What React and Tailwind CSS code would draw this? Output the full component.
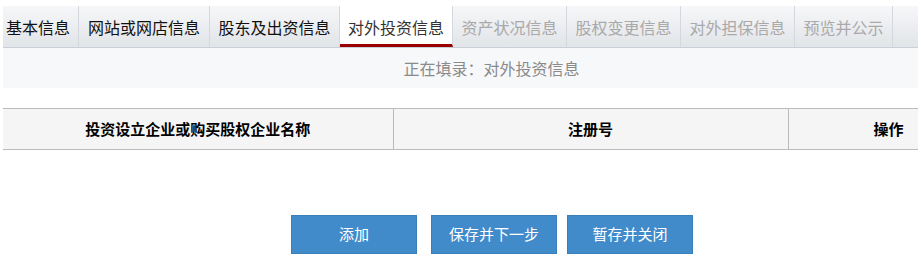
import React from 'react'

const tabs = [
    { label: '基本信息', w: 'w-[76px] pl-[3px] !justify-start', state: 'done' },
    { label: '网站或网店信息', w: 'w-[131px]', state: 'done' },
    { label: '股东及出资信息', w: 'w-[130px]', state: 'done' },
    { label: '对外投资信息', w: 'w-[113px]', state: 'active' },
    { label: '资产状况信息', w: 'w-[114px]', state: 'todo' },
    { label: '股权变更信息', w: 'w-[114px]', state: 'todo' },
    { label: '对外担保信息', w: 'w-[114px]', state: 'todo' },
    { label: '预览并公示', w: 'w-[98px]', state: 'todo' },
]

export default function App() {
    return (
        <div className="w-[921px] h-[267px] bg-white overflow-hidden font-['Noto_Sans_CJK_SC','Microsoft_YaHei',sans-serif]">
            {/* Step tabs */}
            <div className="ml-[3px] mt-[6px] w-[915px] h-[42px] flex bg-gradient-to-b from-[#f6f7f9] to-[#e1e4e8] border-b border-[#c8cfd7]">
                {tabs.map((t) => (
                    <div
                        key={t.label}
                        className={`${t.w} shrink-0 flex items-center justify-center text-[16px] leading-none border-r border-[#d3d8de] ${
                            t.state === 'active'
                                ? 'bg-white text-[#333] border-b-[3px] border-b-[#9b0000] pt-[3px]'
                                : t.state === 'done'
                                    ? 'text-[#111]'
                                    : 'text-[#a9a9a9]'
                        }`}
                    >
                        {t.label}
                    </div>
                ))}
            </div>

            {/* Current step */}
            <div className="ml-[3px] w-[915px] h-[40px] bg-[#f7f8fa] flex items-center justify-center pl-[62px] text-[16px] text-[#8a8a8a] leading-none">
                正在填录：对外投资信息
            </div>

            {/* Table */}
            <div className="ml-[3px] mt-[20px] w-[915px] overflow-hidden">
                <table className="w-[1000px] border-collapse text-[15px] font-bold text-black">
                    <thead>
                        <tr className="h-[41px] bg-[#f5f5f5] border-y border-[#bbbbbb]">
                            <th className="w-[390px] border-r border-[#bbbbbb] text-center font-bold">投资设立企业或购买股权企业名称</th>
                            <th className="w-[395px] border-r border-[#bbbbbb] text-center font-bold">注册号</th>
                            <th className="text-left pl-[85px] font-bold">操作</th>
                        </tr>
                    </thead>
                </table>
            </div>

            {/* Actions */}
            <div className="mt-[65px] flex justify-center gap-[14px] pl-[63px]">
                <button className="w-[126px] h-[39px] bg-[#428bca] border border-[#3a7fba] text-white text-[15px]">添加</button>
                <div className="flex gap-[10px]">
                    <button className="w-[126px] h-[39px] bg-[#428bca] border border-[#3a7fba] text-white text-[15px]">保存并下一步</button>
                    <button className="w-[126px] h-[39px] bg-[#428bca] border border-[#3a7fba] text-white text-[15px]">暂存并关闭</button>
                </div>
            </div>
        </div>
    )
}
